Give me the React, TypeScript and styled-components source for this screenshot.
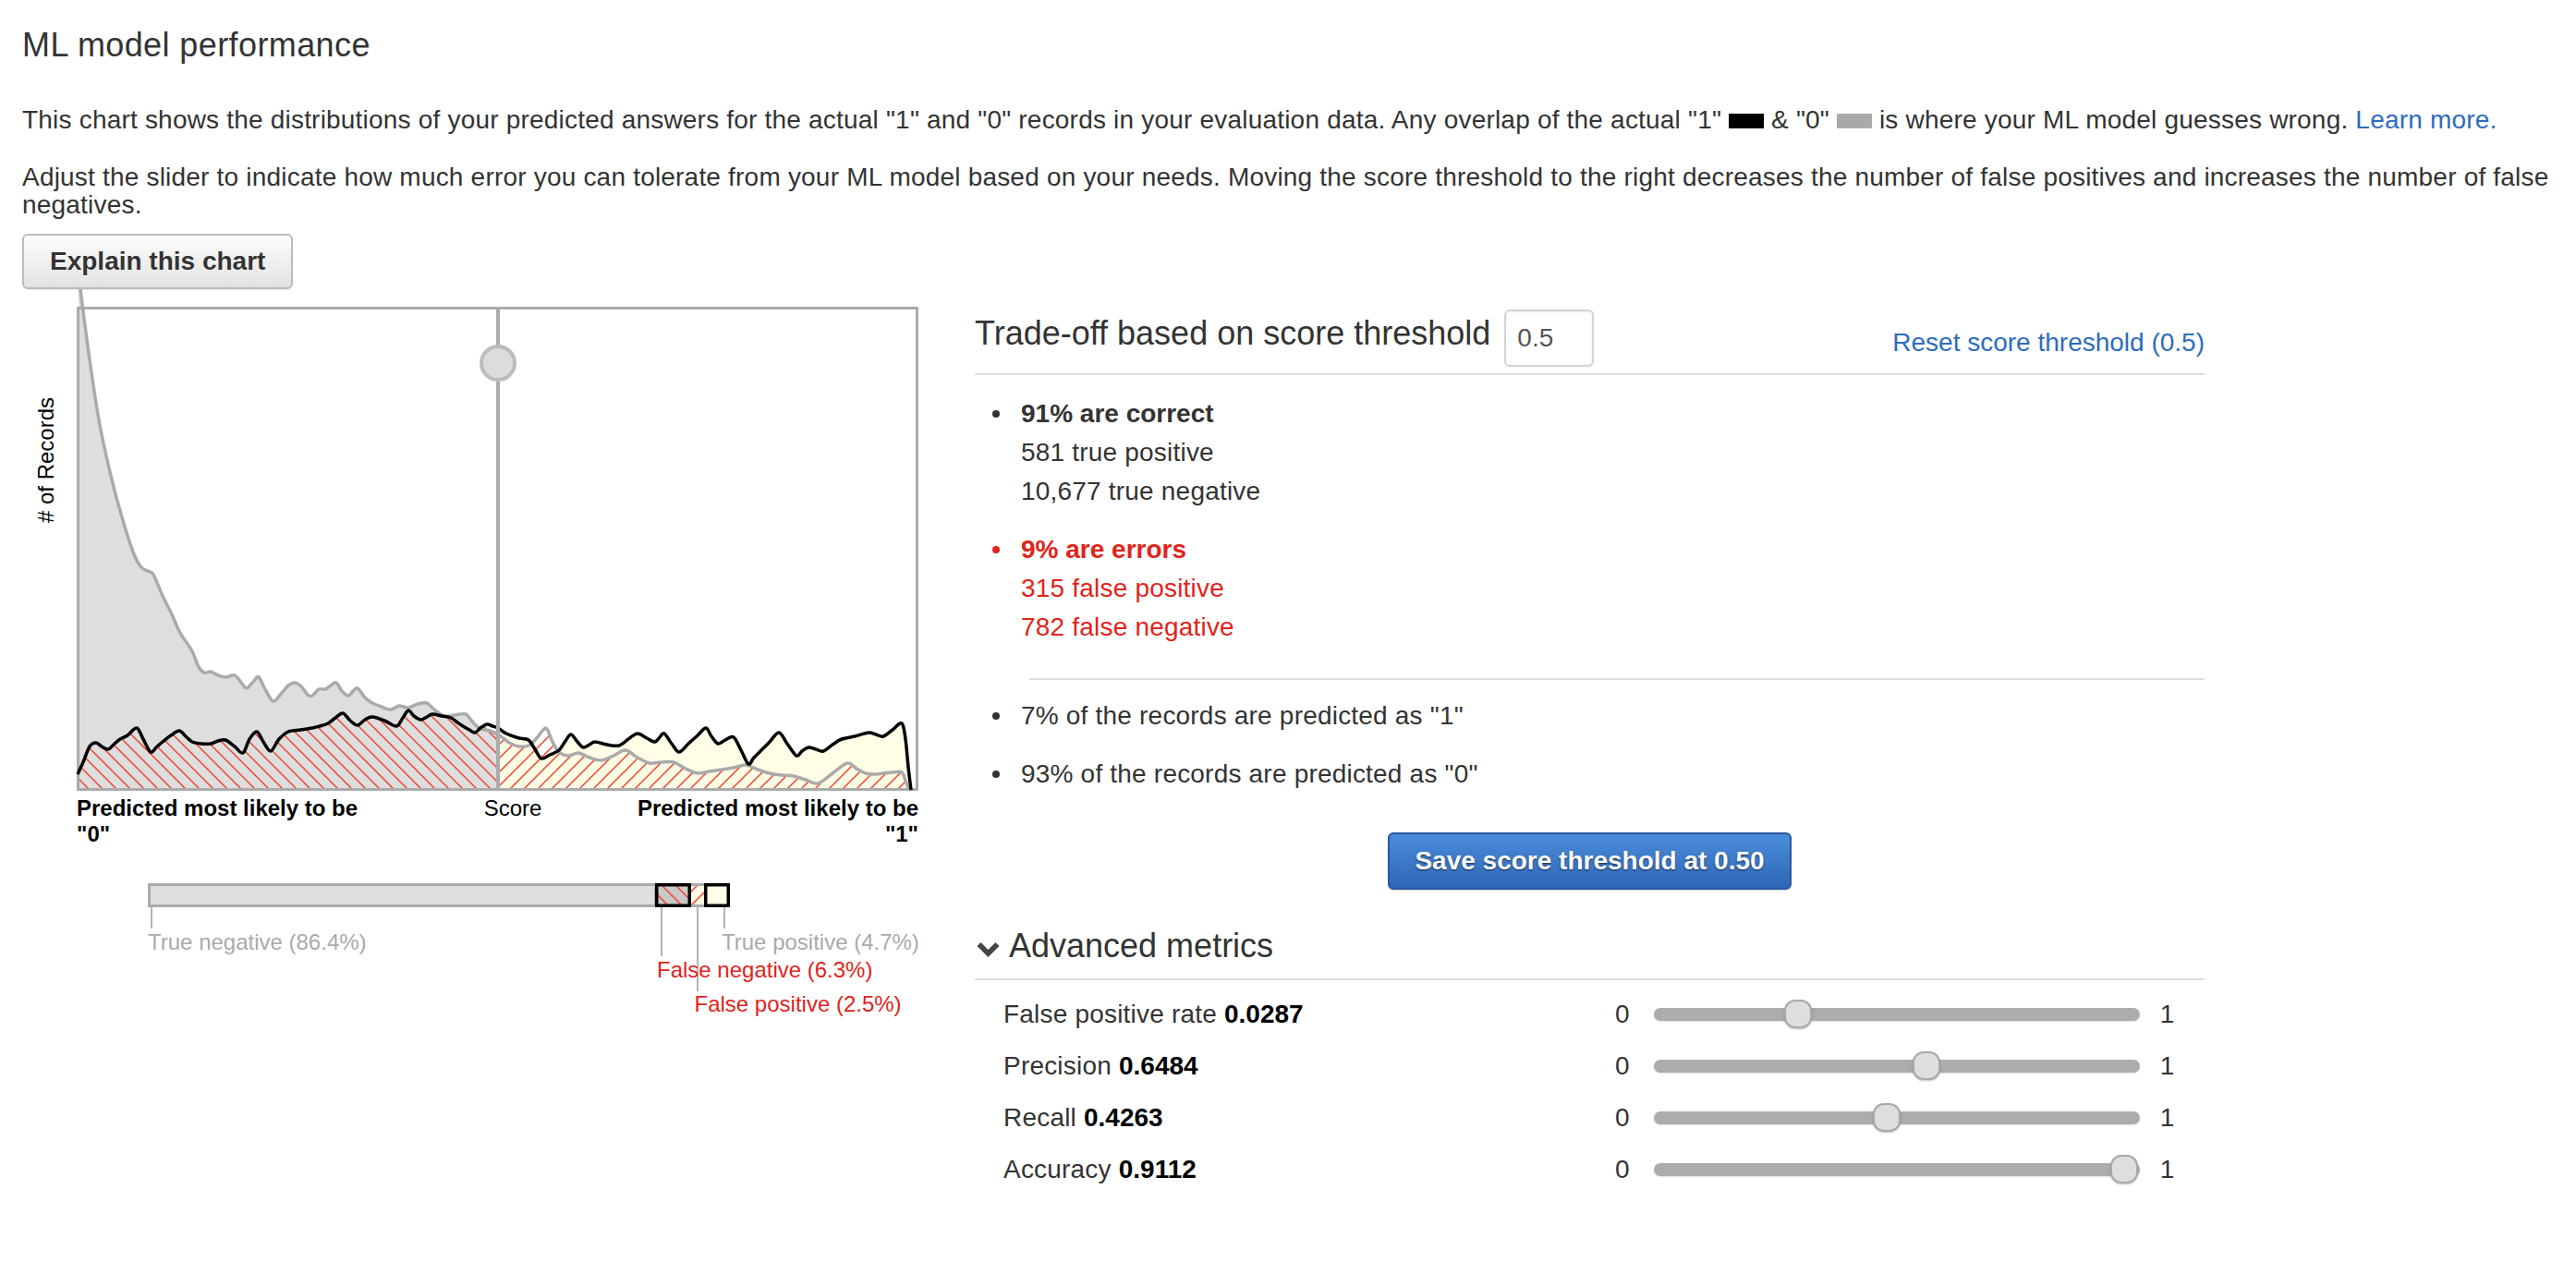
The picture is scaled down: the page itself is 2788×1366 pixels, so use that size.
import React from "react";
import styled, { createGlobalStyle } from "styled-components";

const FONT = `"Liberation Sans", Arial, Helvetica, sans-serif`;
const RED = "#e2231a";
const HATCH = "#ef4430";
const LINK = "#2d6cc0";
const CREAM = "#fffde6";

const GlobalStyle = createGlobalStyle`
  html, body { margin: 0; padding: 0; background: #fff; }
  body { font-family: ${FONT}; color: #333; }
  * { box-sizing: border-box; }
`;

const Page = styled.div`
  padding: 29px 24px 40px;
`;

const Title = styled.h1`
  margin: 0 0 46px;
  font-size: 36px;
  line-height: 40px;
  font-weight: normal;
  letter-spacing: 0.4px;
  color: #333;
`;

const Paragraph = styled.p<{ $mb: number }>`
  margin: 0 0 ${(p) => p.$mb}px;
  font-size: 28px;
  line-height: 30px;
  letter-spacing: 0.2px;
  color: #333;
`;

const Swatch = styled.span<{ $color: string }>`
  display: inline-block;
  width: 38px;
  height: 16px;
  background: ${(p) => p.$color};
`;

const Link = styled.a`
  color: ${LINK};
  text-decoration: none;
  cursor: pointer;
`;

const ExplainButton = styled.button`
  display: block;
  height: 60px;
  padding: 0 28px;
  font-family: ${FONT};
  font-size: 28px;
  font-weight: bold;
  color: #333;
  background: linear-gradient(#fdfdfd, #e2e2e2);
  border: 2px solid #bcbcbc;
  border-radius: 6px;
  text-shadow: 0 1px 0 #fff;
  box-shadow: 0 1px 1px rgba(0, 0, 0, 0.08);
`;

const MainRow = styled.div`
  display: flex;
  align-items: flex-start;
  margin-top: 19px;
`;

const LeftCol = styled.div`
  width: 970px;
  flex: none;
`;

const RightCol = styled.div`
  width: 1331px;
  flex: none;
  margin-left: 61px;
  display: flex;
  flex-direction: column;
`;

const ChartSvg = styled.svg`
  display: block;
  overflow: visible;
`;

const AxisLabels = styled.div`
  margin: 5px 0 0 59px;
  width: 911px;
  display: grid;
  grid-template-columns: 320px 1fr 320px;
  font-size: 24px;
  line-height: 28px;
  color: #000;
`;

const AxisEnd = styled.div<{ $align: "left" | "right" }>`
  font-weight: bold;
  text-align: ${(p) => p.$align};
`;

const AxisMid = styled.div`
  text-align: center;
  padding-left: 33px;
`;

const LegendSvg = styled.svg`
  display: block;
  margin: 23px 0 0 59px;
  overflow: visible;
  font-family: ${FONT};
`;

const TradeHeader = styled.div`
  display: flex;
  align-items: flex-start;
  height: 74px;
  border-bottom: 2px solid #ddd;
`;

const SectionTitle = styled.h3`
  margin: 8.5px 0 0;
  font-size: 36px;
  line-height: 40px;
  font-weight: normal;
  color: #333;
`;

const ThresholdInput = styled.input`
  margin: 3px 0 0 15px;
  width: 97px;
  height: 62px;
  border: 2px solid #d2d2d2;
  border-radius: 6px;
  font-family: ${FONT};
  font-size: 28px;
  color: #555;
  padding: 0 12px;
  box-shadow: inset 0 1px 2px rgba(0, 0, 0, 0.08);
  outline: none;
`;

const ResetLink = styled(Link)`
  margin-left: auto;
  margin-top: 23px;
  font-size: 28px;
  line-height: 32px;
`;

const StatsGroup = styled.ul<{ $pt: number }>`
  margin: 0;
  padding: ${(p) => p.$pt}px 0 0;
  list-style: none;
`;

const StatItem = styled.li<{ $error?: boolean }>`
  position: relative;
  padding-left: 50px;
  font-size: 28px;
  line-height: 42px;
  letter-spacing: 0.2px;
  color: ${(p) => (p.$error ? RED : "#333")};
  & + & {
    margin-top: 21px;
  }
  &::before {
    content: "";
    position: absolute;
    left: 19px;
    top: 17px;
    width: 8px;
    height: 8px;
    border-radius: 50%;
    background: currentColor;
  }
`;

const StatHead = styled.div`
  font-weight: bold;
  letter-spacing: 0;
`;

const StatLine = styled.div``;

const Divider = styled.div`
  height: 2px;
  background: #ddd;
  margin: 33.6px 0 0 59px;
`;

const SaveButton = styled.button`
  align-self: center;
  margin-top: 41.6px;
  height: 62px;
  padding: 0 27px;
  font-family: ${FONT};
  font-size: 28px;
  font-weight: bold;
  color: #fff;
  background: linear-gradient(#4b8ddb, #2e66b7);
  border: 2px solid #2958a3;
  border-radius: 6px;
  text-shadow: 0 1px 2px rgba(0, 0, 0, 0.65);
  box-shadow: 0 1px 1px rgba(0, 0, 0, 0.15);
`;

const AdvancedHeader = styled.div`
  display: flex;
  align-items: center;
  margin-top: 41.5px;
  padding-bottom: 14.5px;
  border-bottom: 2px solid #ddd;
  font-size: 36px;
  line-height: 40px;
  color: #333;
`;

const Chevron = styled.svg`
  flex: none;
  margin: 6px 10px 0 2px;
`;

const MetricsList = styled.div`
  padding-top: 9px;
`;

const MetricRow = styled.div`
  display: flex;
  align-items: center;
  height: 56px;
  padding-left: 31px;
  font-size: 28px;
  letter-spacing: 0.2px;
  color: #333;
`;

const MetricLabel = styled.div`
  width: 662px;
  flex: none;
`;

const MetricValue = styled.b`
  color: #000;
  letter-spacing: 0;
`;

const ScaleEnd = styled.span``;

const Track = styled.div`
  position: relative;
  width: 526px;
  height: 14px;
  margin: 0 22px 0 26px;
  border-radius: 7px;
  background: #acacac;
  box-shadow: 0 1px 2px rgba(0, 0, 0, 0.12);
`;

const Handle = styled.div`
  position: absolute;
  top: 50%;
  width: 30px;
  height: 31px;
  margin: -15.5px 0 0 -15px;
  background: #dedede;
  border: 2px solid #a9a9a9;
  border-radius: 12px;
  box-shadow: 0 1px 2px rgba(0, 0, 0, 0.25);
`;

type Pt = [number, number];

// chart-local origin in page coordinates
const OX = 24;
const OY = 332;

const grayRaw: Pt[] = [
  [87, 313], [93, 360], [100, 410], [108, 460], [120, 515], [132, 560], [145, 600], [153, 614],
  [160, 618], [166, 622], [176, 645], [186, 665], [195, 685], [208, 705], [215, 722], [221, 728],
  [228, 727], [234, 730], [244, 733], [254, 731], [262, 740], [267, 745], [274, 738], [280, 733],
  [288, 748], [296, 759], [305, 750], [312, 742], [319, 739], [326, 743], [333, 752], [338, 753],
  [345, 746], [352, 746], [358, 742], [364, 739], [370, 748], [377, 753], [382, 748], [387, 745],
  [395, 755], [403, 761], [413, 765], [423, 768], [432, 764], [442, 766], [452, 762], [462, 761],
  [470, 768], [481, 775], [492, 774], [504, 773], [512, 782], [520, 789], [530, 791], [539, 795],
  [546, 800], [553, 805], [562, 808], [572, 807], [580, 800], [588, 790], [592, 789], [598, 803],
  [605, 814], [615, 818], [626, 815], [638, 820], [651, 823], [664, 818], [677, 812], [690, 820],
  [703, 826], [716, 825], [729, 825], [742, 832], [755, 837], [768, 835], [781, 833], [794, 831],
  [807, 828], [820, 833], [833, 837], [846, 839], [859, 840], [872, 844], [885, 848], [900, 838],
  [917, 826], [927, 832], [937, 837], [946, 838], [956, 837], [966, 836], [976, 836], [980, 845],
  [984, 855],
];

const blackRaw: Pt[] = [
  [84, 838], [90, 825], [97, 808], [104, 804], [110, 808], [117, 811], [124, 805], [130, 800],
  [138, 796], [148, 788], [155, 800], [163, 814], [170, 808], [176, 803], [185, 796], [194, 791],
  [201, 797], [208, 803], [218, 805], [228, 805], [236, 802], [244, 801], [254, 808], [263, 815],
  [270, 800], [278, 792], [285, 803], [293, 813], [302, 800], [312, 792], [325, 790], [338, 788],
  [346, 786], [355, 783], [363, 777], [371, 772], [379, 780], [387, 785], [395, 779], [403, 776],
  [416, 780], [429, 786], [436, 777], [442, 769], [448, 775], [455, 779], [462, 776], [468, 773],
  [478, 775], [488, 777], [495, 782], [501, 786], [508, 790], [514, 793], [520, 788], [527, 784],
  [533, 786], [539, 788], [546, 793], [553, 796], [562, 799], [572, 801], [579, 811], [586, 821],
  [595, 817], [605, 812], [612, 802], [618, 795], [625, 803], [631, 809], [638, 806], [644, 803],
  [657, 806], [670, 807], [680, 800], [690, 794], [700, 799], [709, 803], [714, 798], [719, 794],
  [727, 805], [735, 814], [745, 805], [755, 796], [764, 788], [770, 797], [777, 805], [785, 801],
  [794, 798], [802, 812], [810, 827], [816, 820], [823, 813], [833, 803], [843, 793], [852, 805],
  [862, 818], [868, 813], [875, 809], [883, 811], [891, 813], [901, 806], [911, 800], [925, 797],
  [940, 793], [948, 795], [956, 797], [966, 790], [976, 783], [980, 800], [983, 830], [986, 855],
];

const toLocal = (pts: Pt[]): Pt[] => pts.map(([x, y]) => [x - OX, y - OY]);

const smooth = (pts: Pt[]): string => {
  let d = `M${pts[0][0]},${pts[0][1]}`;
  for (let i = 0; i < pts.length - 1; i++) {
    const p0 = pts[i - 1] || pts[i];
    const p1 = pts[i];
    const p2 = pts[i + 1];
    const p3 = pts[i + 2] || p2;
    const c1x = p1[0] + (p2[0] - p0[0]) / 6;
    const c1y = p1[1] + (p2[1] - p0[1]) / 6;
    const c2x = p2[0] - (p3[0] - p1[0]) / 6;
    const c2y = p2[1] - (p3[1] - p1[1]) / 6;
    d += ` C${c1x.toFixed(1)},${c1y.toFixed(1)} ${c2x.toFixed(1)},${c2y.toFixed(1)} ${p2[0]},${p2[1]}`;
  }
  return d;
};

const BOTTOM = 522;
const gray = toLocal(grayRaw);
const black = toLocal(blackRaw);
const grayLine = smooth(gray);
const blackLine = smooth(black);
const grayArea = `${grayLine} L${gray[gray.length - 1][0]},${BOTTOM} L${gray[0][0] - 2},${BOTTOM} L${gray[0][0] - 2},${gray[0][1]} Z`;
const blackArea = `${blackLine} L${black[black.length - 1][0]},${BOTTOM} L${black[0][0]},${BOTTOM} Z`;
const TX = 539 - OX;

const HatchDefs: React.FC<{ prefix: string }> = ({ prefix }) => (
  <defs>
    <pattern id={`${prefix}-back`} width="15" height="15" patternUnits="userSpaceOnUse">
      <path d="M-3.75,11.25 l7.5,7.5 M0,0 l15,15 M11.25,-3.75 l7.5,7.5" stroke={HATCH} strokeWidth="1.5" />
    </pattern>
    <pattern id={`${prefix}-fwd`} width="15" height="15" patternUnits="userSpaceOnUse">
      <path d="M-3.75,3.75 l7.5,-7.5 M0,15 l15,-15 M11.25,18.75 l7.5,-7.5" stroke={HATCH} strokeWidth="1.5" />
    </pattern>
  </defs>
);

const DistributionChart: React.FC = () => (
  <ChartSvg width={970} height={524} viewBox="0 0 970 524">
    <HatchDefs prefix="chart" />
    <defs>
      <clipPath id="clip-left">
        <rect x="61" y="-40" width={TX - 61} height="562" />
      </clipPath>
      <clipPath id="clip-right">
        <rect x={TX} y="0" width={968 - TX} height="522" />
      </clipPath>
    </defs>
    <g clipPath="url(#clip-left)">
      <path d={grayArea} fill="#dedede" />
      <path d={blackArea} fill="url(#chart-back)" />
    </g>
    <g clipPath="url(#clip-right)">
      <path d={blackArea} fill={CREAM} />
      <path d={grayArea} fill="url(#chart-fwd)" />
    </g>
    <rect x="60.5" y="1.5" width="908" height="521" fill="none" stroke="#ababab" strokeWidth="3" />
    <path d={grayLine} fill="none" stroke="#aaa" strokeWidth="3.5" strokeLinejoin="round" />
    <path d={blackLine} fill="none" stroke="#000" strokeWidth="3.5" strokeLinejoin="round" />
    <line x1={TX} y1="0" x2={TX} y2="524" stroke="#ababab" strokeWidth="4" />
    <circle cx={TX} cy="61" r="18" fill="#dcdcdc" stroke="#bcbcbc" strokeWidth="4" />
    <text
      transform="translate(34,166) rotate(-90)"
      textAnchor="middle"
      fontSize="24"
      fill="#000"
      fontFamily={FONT}
    >
      # of Records
    </text>
  </ChartSvg>
);

const OutcomeLegend: React.FC = () => (
  <LegendSvg width={911} height={170} viewBox="0 0 911 170">
    <HatchDefs prefix="legend" />
    <rect x="78.5" y="17.5" width="548" height="23" fill="#dedede" stroke="#ababab" strokeWidth="3" />
    <rect x="665" y="16" width="14" height="26" fill={CREAM} />
    <rect x="665" y="16" width="14" height="26" fill="url(#legend-fwd)" />
    <line x1="665" y1="17.5" x2="679" y2="17.5" stroke="#ababab" strokeWidth="3" />
    <line x1="665" y1="40.5" x2="679" y2="40.5" stroke="#ababab" strokeWidth="3" />
    <rect x="627.75" y="17.75" width="35.5" height="22.5" fill="#c9c9c9" />
    <rect x="627.75" y="17.75" width="35.5" height="22.5" fill="url(#legend-back)" stroke="#000" strokeWidth="3.5" />
    <rect x="680.75" y="17.75" width="24.5" height="22.5" fill={CREAM} stroke="#000" strokeWidth="3.5" />
    <g stroke="#b4b4b4" strokeWidth="2">
      <line x1="81" y1="42" x2="81" y2="65" />
      <line x1="633" y1="42" x2="633" y2="95" />
      <line x1="672" y1="42" x2="672" y2="133" />
      <line x1="701" y1="42" x2="701" y2="65" />
    </g>
    <g fontSize="24">
      <text x="77" y="88" fill="#aaa">True negative (86.4%)</text>
      <text x="698" y="88" fill="#aaa">True positive (4.7%)</text>
      <text x="628" y="118" fill={RED}>False negative (6.3%)</text>
      <text x="668.5" y="155" fill={RED}>False positive (2.5%)</text>
    </g>
  </LegendSvg>
);

const metrics = [
  { label: "False positive rate", value: "0.0287", pos: 29.7 },
  { label: "Precision", value: "0.6484", pos: 56.1 },
  { label: "Recall", value: "0.4263", pos: 47.9 },
  { label: "Accuracy", value: "0.9112", pos: 96.9 },
];

export default function App() {
  return (
    <>
      <GlobalStyle />
      <Page>
        <Title>ML model performance</Title>
        <Paragraph $mb={32}>
          This chart shows the distributions of your predicted answers for the actual "1" and "0" records in your
          evaluation data. Any overlap of the actual "1" <Swatch $color="#000" /> &amp; "0" <Swatch $color="#aaa" /> is
          where your ML model guesses wrong. <Link>Learn more.</Link>
        </Paragraph>
        <Paragraph $mb={16}>
          Adjust the slider to indicate how much error you can tolerate from your ML model based on your needs. Moving
          the score threshold to the right decreases the number of false positives and increases the number of false
          negatives.
        </Paragraph>
        <ExplainButton>Explain this chart</ExplainButton>
        <MainRow>
          <LeftCol>
            <DistributionChart />
            <AxisLabels>
              <AxisEnd $align="left">Predicted most likely to be "0"</AxisEnd>
              <AxisMid>Score</AxisMid>
              <AxisEnd $align="right">Predicted most likely to be "1"</AxisEnd>
            </AxisLabels>
            <OutcomeLegend />
          </LeftCol>
          <RightCol>
            <TradeHeader>
              <SectionTitle>Trade-off based on score threshold</SectionTitle>
              <ThresholdInput defaultValue="0.5" />
              <ResetLink>Reset score threshold (0.5)</ResetLink>
            </TradeHeader>
            <StatsGroup $pt={21.4}>
              <StatItem>
                <StatHead>91% are correct</StatHead>
                <StatLine>581 true positive</StatLine>
                <StatLine>10,677 true negative</StatLine>
              </StatItem>
              <StatItem $error>
                <StatHead>9% are errors</StatHead>
                <StatLine>315 false positive</StatLine>
                <StatLine>782 false negative</StatLine>
              </StatItem>
            </StatsGroup>
            <Divider />
            <StatsGroup $pt={18.4}>
              <StatItem>7% of the records are predicted as "1"</StatItem>
              <StatItem>93% of the records are predicted as "0"</StatItem>
            </StatsGroup>
            <SaveButton>Save score threshold at 0.50</SaveButton>
            <AdvancedHeader>
              <Chevron width="25" height="17" viewBox="0 0 25 17">
                <path d="M0.5,5 L4.5,1 L12.5,9 L20.5,1 L24.5,5 L12.5,17 Z" fill="#444" />
              </Chevron>
              Advanced metrics
            </AdvancedHeader>
            <MetricsList>
              {metrics.map((m) => (
                <MetricRow key={m.label}>
                  <MetricLabel>
                    {m.label} <MetricValue>{m.value}</MetricValue>
                  </MetricLabel>
                  <ScaleEnd>0</ScaleEnd>
                  <Track>
                    <Handle style={{ left: `${m.pos}%` }} />
                  </Track>
                  <ScaleEnd>1</ScaleEnd>
                </MetricRow>
              ))}
            </MetricsList>
          </RightCol>
        </MainRow>
      </Page>
    </>
  );
}
